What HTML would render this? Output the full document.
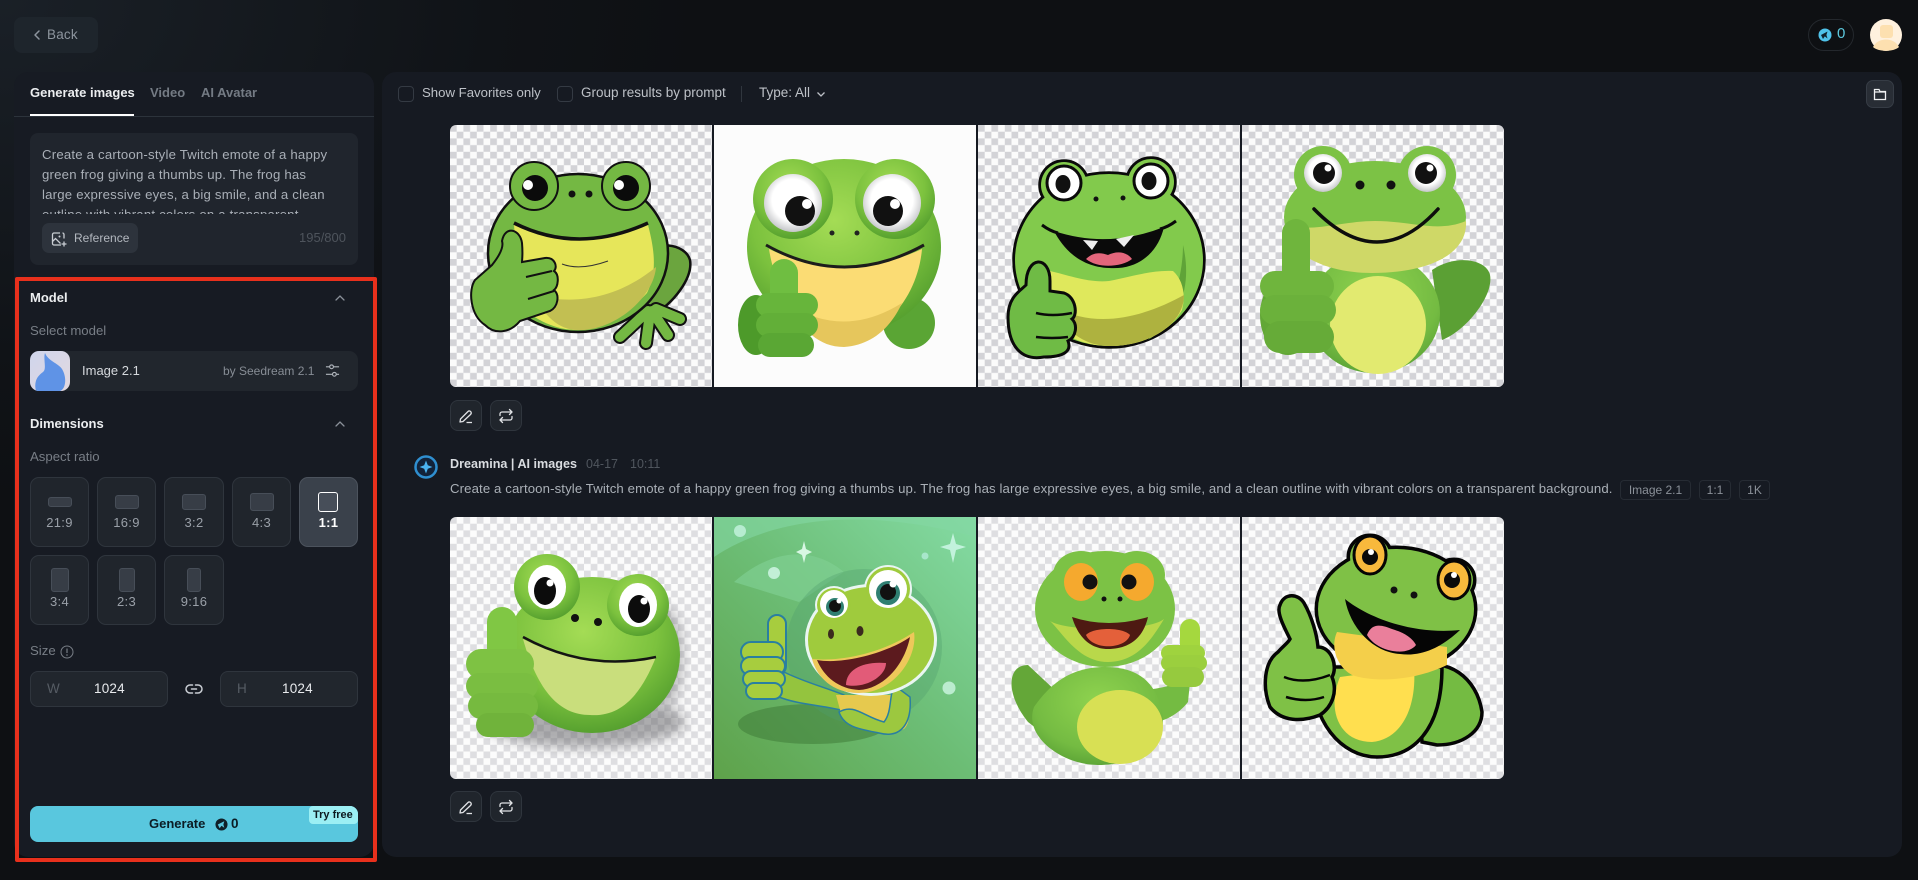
<!DOCTYPE html>
<html lang="en"><head><meta charset="utf-8"><title>Dreamina</title>
<style>
html,body{margin:0;padding:0;width:1918px;height:880px;overflow:hidden;background:#0e1013}
body{font-family:"Liberation Sans",sans-serif;position:relative;color:#e8eaed}
.bg{position:absolute;inset:0;background:radial-gradient(700px 500px at 0 0,#1a2027 0%,#101317 70%,#0e1013 100%)}
.a{position:absolute;box-sizing:border-box}
.t{position:absolute;white-space:nowrap;line-height:20px;font-size:13.5px}
.b{font-weight:700}
.ar{position:absolute;box-sizing:border-box;width:59px;height:70px;border:1px solid #2f353d;border-radius:9px;background:#20252c;color:#9aa0a8;font-size:13px;text-align:center;line-height:20px}
.ar i{position:absolute;display:block;background:#373d46;border:1px solid #474e58;border-radius:3px;box-sizing:border-box}
.ar span{position:absolute;left:0;right:0;top:35px;letter-spacing:.3px}
.ar.on{background:#3a414b;border-color:#4c535d;color:#fff;font-weight:700}
.ar.on i{background:#474e59;border:1.5px solid #fff}
.ib{position:absolute;box-sizing:border-box;width:32px;height:31px;border:1px solid #2f353d;border-radius:8px;background:#20252c}
.ib svg{position:absolute;left:7px;top:7px}
.fr{position:absolute;width:262px;height:262px;display:block}
.tag{position:absolute;box-sizing:border-box;height:20px;top:480px;border:1px solid #262b33;border-radius:4px;color:#8b9199;font-size:12px;line-height:18px;text-align:center}
.cb{position:absolute;box-sizing:border-box;width:16px;height:16px;top:86px;border:1px solid #343a43;border-radius:4px}
</style></head><body>
<div class="bg"></div>
<svg width="0" height="0" style="position:absolute"><defs>
<pattern id="ck" width="13.4" height="13.4" patternUnits="userSpaceOnUse"><rect width="13.4" height="13.4" fill="#fbfbfb"/><rect width="6.7" height="6.7" fill="#d3d3d7"/><rect x="6.7" y="6.7" width="6.7" height="6.7" fill="#d3d3d7"/></pattern>
<pattern id="ck2" width="13.4" height="13.4" patternUnits="userSpaceOnUse"><rect width="13.4" height="13.4" fill="#fcfcfc"/><rect width="6.7" height="6.7" fill="#dedee1"/><rect x="6.7" y="6.7" width="6.7" height="6.7" fill="#dedee1"/></pattern>
<radialGradient id="g3" cx=".45" cy=".35" r=".7"><stop offset="0" stop-color="#a4dc55"/><stop offset=".6" stop-color="#7cc23e"/><stop offset="1" stop-color="#4f9a2c"/></radialGradient>
<radialGradient id="g4" cx=".5" cy=".35" r=".7"><stop offset="0" stop-color="#8fd34f"/><stop offset=".7" stop-color="#74bb42"/><stop offset="1" stop-color="#58a034"/></radialGradient>
<linearGradient id="bg6" x1="1" y1="0" x2="0" y2="1"><stop offset="0" stop-color="#84dba4"/><stop offset=".5" stop-color="#6cbd75"/><stop offset="1" stop-color="#5ea24a"/></linearGradient>
<radialGradient id="ew" cx=".5" cy=".45" r=".6"><stop offset=".6" stop-color="#fff"/><stop offset="1" stop-color="#b5b7ba"/></radialGradient>
<linearGradient id="mt" x1="0" y1="0" x2="1" y2="1"><stop offset="0" stop-color="#cfd5ec"/><stop offset="1" stop-color="#e3d9e0"/></linearGradient>
<filter id="bl" x="-20%" y="-20%" width="140%" height="140%"><feGaussianBlur stdDeviation="6"/></filter>
</defs></svg>

<!-- top -->
<div class="a" style="left:14px;top:17px;width:84px;height:36px;background:#1e252c;border-radius:8px"></div>
<svg class="a" style="left:31px;top:27px" width="12" height="16" viewBox="0 0 12 16"><path d="M8 4 L4 8 L8 12" fill="none" stroke="#8d959e" stroke-width="1.500" stroke-linecap="round" stroke-linejoin="round"/></svg>
<div class="t" style="left:47px;top:25px;color:#8d959e;font-size:13.500px;letter-spacing:.2px">Back</div>

<div class="a" style="left:1808px;top:19px;width:46px;height:32px;border:1px solid #24282d;border-radius:16px"></div>
<svg class="a" style="left:1818px;top:28px" width="14" height="14" viewBox="0 0 14 14"><circle cx="7" cy="7" r="6.500" fill="#4fc3ea"/><path d="M3 7 L9.500 3.500 L8.400 7 L9.500 10.500 L6.800 8.400 L5 11 Z" fill="#10242e"/></svg>
<div class="t" style="left:1837px;top:24px;color:#5cc8dd;font-size:15px">0</div>
<svg class="a" style="left:1870px;top:19px" width="32" height="32" viewBox="0 0 32 32"><circle cx="16" cy="16" r="16" fill="#fff1de"/><rect x="10" y="6" width="13" height="13" rx="3" fill="#fde0b0"/><path d="M3 28 C8 18 24 18 29 28 C24 33 8 33 3 28Z" fill="#fde0b0"/></svg>

<!-- left panel -->
<div class="a" style="left:14px;top:72px;width:360px;height:785px;background:#171b23;border-radius:14px"></div>
<div class="a" style="left:14px;top:116px;width:360px;height:1px;background:#2c333b"></div>
<div class="a" style="left:30px;top:114px;width:104px;height:2px;background:#fff"></div>
<div class="t b" style="left:30px;top:83px;font-size:13px;color:#eceef0">Generate images</div>
<div class="t b" style="left:150px;top:83px;font-size:13px;color:#747b84">Video</div>
<div class="t b" style="left:201px;top:83px;font-size:13px;color:#747b84">AI Avatar</div>

<div class="a" style="left:30px;top:133px;width:328px;height:132px;background:#20252d;border-radius:8px"></div>
<div class="a" style="left:42px;top:145px;width:300px;height:69px;overflow:hidden;color:#a9afb7;font-size:13.200px;line-height:20px;letter-spacing:.2px">
<div style="white-space:nowrap">Create a cartoon-style Twitch emote of a happy</div>
<div style="white-space:nowrap">green frog giving a thumbs up. The frog has</div>
<div style="white-space:nowrap">large expressive eyes, a big smile, and a clean</div>
<div style="white-space:nowrap">outline with vibrant colors on a transparent</div>
</div>
<div class="a" style="left:42px;top:223px;width:96px;height:30px;background:#2d333c;border-radius:7px"></div>
<svg class="a" style="left:51px;top:231px" width="16" height="16" viewBox="0 0 16 16"><path d="M9 2H3a1.500 1.500 0 0 0-1.500 1.500v9A1.500 1.500 0 0 0 3 14h7M1.500 10.500l3-3 5 5" fill="none" stroke="#c9cdd3" stroke-width="1.300"/><path d="M13 7.500V3.500a1.500 1.500 0 0 0-1.500-1.500" fill="none" stroke="#c9cdd3" stroke-width="1.300"/><path d="M13 10.500v5M10.500 13h5" stroke="#c9cdd3" stroke-width="1.300"/><circle cx="8.500" cy="5.500" r="1" fill="#c9cdd3"/></svg>
<div class="t" style="left:74px;top:228px;color:#b3b8bf;font-size:12px">Reference</div>
<div class="t" style="right:1572px;top:228px;color:#4e545c;font-size:13px">195/800</div>

<div class="t b" style="left:30px;top:288px;font-size:13px;color:#eceef0">Model</div>
<svg class="a" style="left:333px;top:292px" width="14" height="12" viewBox="0 0 14 12"><path d="M3 8 L7 4 L11 8" fill="none" stroke="#8a9099" stroke-width="1.300" stroke-linecap="round"/></svg>
<div class="t" style="left:30px;top:321px;color:#787e86;font-size:13.200px">Select model</div>
<div class="a" style="left:30px;top:351px;width:328px;height:40px;background:#21262d;border-radius:9px"></div>
<svg class="a" style="left:30px;top:351px;border-radius:9px" width="40" height="40" viewBox="0 0 40 40"><rect width="40" height="40" fill="url(#mt)"/><path d="M15 2 C18 10 28 12 32 18 C37 26 36 38 30 40 H6 C4 32 6 26 13 21 C17 18 13 8 15 2Z" fill="#5f93e6"/></svg>
<div class="t" style="left:82px;top:361px;font-size:13px;color:#d6d9dd">Image 2.1</div>
<div class="t" style="left:223px;top:361px;font-size:12px;color:#878d95">by Seedream 2.1</div>
<svg class="a" style="left:325px;top:363px" width="15" height="15" viewBox="0 0 16 16"><path d="M1 4H5M9 4H15M1 12H8M12 12H15" stroke="#b0b5bc" stroke-width="1.200" fill="none"/><circle cx="7" cy="4" r="2" fill="none" stroke="#b0b5bc" stroke-width="1.200"/><circle cx="10" cy="12" r="2" fill="none" stroke="#b0b5bc" stroke-width="1.200"/></svg>

<div class="t b" style="left:30px;top:414px;font-size:13px;color:#eceef0">Dimensions</div>
<svg class="a" style="left:333px;top:418px" width="14" height="12" viewBox="0 0 14 12"><path d="M3 8 L7 4 L11 8" fill="none" stroke="#8a9099" stroke-width="1.300" stroke-linecap="round"/></svg>
<div class="t" style="left:30px;top:447px;color:#787e86;font-size:13.200px">Aspect ratio</div>

<div class="ar" style="left:30px;top:477px"><i style="left:17px;top:19px;width:24px;height:10px"></i><span>21:9</span></div>
<div class="ar" style="left:97px;top:477px"><i style="left:17px;top:17px;width:24px;height:14px"></i><span>16:9</span></div>
<div class="ar" style="left:164px;top:477px;width:60px"><i style="left:17px;top:16px;width:24px;height:16px"></i><span>3:2</span></div>
<div class="ar" style="left:232px;top:477px"><i style="left:17px;top:15px;width:24px;height:18px"></i><span>4:3</span></div>
<div class="ar on" style="left:299px;top:477px"><i style="left:18px;top:14px;width:20px;height:20px"></i><span>1:1</span></div>
<div class="ar" style="left:30px;top:555px"><i style="left:20px;top:12px;width:18px;height:24px"></i><span style="top:36px">3:4</span></div>
<div class="ar" style="left:97px;top:555px"><i style="left:21px;top:12px;width:16px;height:24px"></i><span style="top:36px">2:3</span></div>
<div class="ar" style="left:164px;top:555px;width:60px"><i style="left:22px;top:12px;width:14px;height:24px"></i><span style="top:36px">9:16</span></div>

<div class="t" style="left:30px;top:641px;color:#787e86;font-size:13.200px">Size</div>
<svg class="a" style="left:60px;top:645px" width="14" height="14" viewBox="0 0 14 14"><circle cx="7" cy="7" r="6" fill="none" stroke="#787e86" stroke-width="1"/><path d="M7 3.500V8" stroke="#787e86" stroke-width="1.200"/><circle cx="7" cy="10" r=".8" fill="#787e86"/></svg>
<div class="a" style="left:30px;top:671px;width:138px;height:36px;background:#21262d;border:1px solid #2f353d;border-radius:8px"></div>
<div class="a" style="left:220px;top:671px;width:138px;height:36px;background:#21262d;border:1px solid #2f353d;border-radius:8px"></div>
<div class="t" style="left:47px;top:679px;color:#565c64;font-size:13.500px">W</div>
<div class="t" style="left:94px;top:679px;color:#e8eaed;font-size:13.500px;letter-spacing:.2px">1024</div>
<div class="t" style="left:237px;top:679px;color:#565c64;font-size:13.500px">H</div>
<div class="t" style="left:282px;top:679px;color:#e8eaed;font-size:13.500px;letter-spacing:.2px">1024</div>
<svg class="a" style="left:185px;top:681px" width="18" height="16" viewBox="0 0 18 16"><path d="M7.500 4H5a4 4 0 0 0 0 8h2.500M10.500 4H13a4 4 0 0 1 0 8h-2.500M6.500 8h5" fill="none" stroke="#c9cdd3" stroke-width="1.500" stroke-linecap="round"/></svg>

<div class="a" style="left:30px;top:806px;width:328px;height:36px;background:#59c7de;border-radius:8px"></div>
<div class="a" style="left:309px;top:806px;width:49px;height:18px;background:#9beff4;border-radius:4px 8px 4px 4px"></div>
<div class="t b" style="left:313px;top:805px;font-size:11px;color:#0c1a20">Try free</div>
<div class="t b" style="left:149px;top:814px;font-size:13px;color:#0b1c24">Generate</div>
<svg class="a" style="left:215px;top:818px" width="13" height="13" viewBox="0 0 14 14"><circle cx="7" cy="7" r="6.500" fill="#102028"/><path d="M3 7 L10 3.500 L9 7 L10 10.500 L7 8.400 L5 11 Z" fill="#59c7de"/></svg>
<div class="t b" style="left:231px;top:814px;font-size:13.500px;color:#0b1c24">0</div>

<!-- red -->
<div class="a" style="left:15px;top:277px;width:362px;height:585px;border:4px solid #e8301c;border-radius:2px"></div>

<!-- main panel -->
<div class="a" style="left:382px;top:72px;width:1520px;height:785px;background:#161a22;border-radius:14px"></div>
<div class="cb" style="left:398px"></div>
<div class="t" style="left:422px;top:83px;color:#bdc1c7;font-size:13.200px">Show Favorites only</div>
<div class="cb" style="left:557px"></div>
<div class="t" style="left:581px;top:83px;color:#bdc1c7;font-size:13.500px">Group results by prompt</div>
<div class="a" style="left:741px;top:86px;width:1px;height:16px;background:#30363e"></div>
<div class="t" style="left:759px;top:83px;color:#bdc1c7;font-size:13.500px">Type: All</div>
<svg class="a" style="left:815px;top:88px" width="12" height="12" viewBox="0 0 12 12"><path d="M2.500 4.500 L6 8 L9.500 4.500" fill="none" stroke="#bdc1c7" stroke-width="1.300"/></svg>
<div class="a" style="left:1866px;top:80px;width:28px;height:28px;background:#282d35;border:1px solid #363c45;border-radius:7px"></div>
<svg class="a" style="left:1873px;top:87px" width="14" height="14" viewBox="0 0 14 14"><path d="M1.500 5V2.500H6L7 4.500H12.500V12.500H1.500V5H12.500" fill="none" stroke="#f0f1f3" stroke-width="1.300"/></svg>

<!-- FROG 1 -->
<svg class="fr" style="left:450px;top:125px;border-radius:6px 0 0 6px" viewBox="0 0 262 262">
<rect width="262" height="262" fill="url(#ck)"/>
<path d="M188 130C205 115 235 118 240 135C243 152 225 178 200 192L178 185Z" fill="#6ba53e" stroke="#111" stroke-width="2.500"/>
<g fill="none" stroke-linecap="round"><g stroke="#111" stroke-width="14"><path d="M198 186L170 212M200 188L196 218M202 186L218 210M206 184L230 194"/></g><g stroke="#74b843" stroke-width="10"><path d="M198 186L170 212M200 188L196 218M202 186L218 210M206 184L230 194"/></g></g>
<ellipse cx="128" cy="128" rx="90" ry="79" fill="#74b843" stroke="#111" stroke-width="2.500"/>
<path d="M64 100Q128 130 198 100C206 130 206 150 197 168C175 192 150 205 128 205C105 205 85 195 70 180Z" fill="#e6e65a"/>
<path d="M84 170C130 182 172 170 206 142C204 172 165 206 128 205C108 205 94 190 84 170Z" fill="#c2bf52"/>
<path d="M64 98Q128 130 198 98" fill="none" stroke="#111" stroke-width="3.500"/>
<path d="M112 139Q130 146 158 136" fill="none" stroke="#333" stroke-width="1"/>
<circle cx="84" cy="61" r="24" fill="#74b843" stroke="#111" stroke-width="2"/><circle cx="176" cy="61" r="24" fill="#74b843" stroke="#111" stroke-width="2"/>
<circle cx="85" cy="63" r="13" fill="#0b0b0b"/><circle cx="176" cy="63" r="13" fill="#0b0b0b"/>
<circle cx="78" cy="60" r="5" fill="#fff"/><circle cx="169" cy="60" r="5" fill="#fff"/>
<circle cx="122" cy="69" r="3.500" fill="#111"/><circle cx="139" cy="69" r="3.500" fill="#111"/>
<path d="M42 140C50 130 54 122 52 116C55 100 70 104 72 118C73 130 72 135 72 137L95 133C105 132 108 142 104 146C110 150 108 162 104 165C110 170 108 182 100 186L70 196C60 208 45 210 35 200C20 190 18 165 25 155Z" fill="#74b843" stroke="#111" stroke-width="2"/>
<path d="M76 152L102 146M78 174L104 166" stroke="#111" stroke-width="2" fill="none"/>
</svg>

<!-- FROG 2 -->
<svg class="fr" style="left:714px;top:125px" viewBox="0 0 262 262">
<rect width="262" height="262" fill="#fcfcfc"/>
<ellipse cx="195" cy="198" rx="26" ry="26" fill="#5aa534"/>
<g fill="url(#g3)"><ellipse cx="130" cy="122" rx="97" ry="88"/><circle cx="79" cy="74" r="40"/><circle cx="181" cy="74" r="40"/></g>
<path d="M55 124Q130 160 208 124C204 170 172 212 130 212C90 212 62 170 55 124Z" fill="#fbdc74"/>
<path d="M76 180Q130 214 188 178C178 200 160 220 130 222C105 222 88 205 76 180Z" fill="#e6c65c"/>
<path d="M52 120Q130 164 210 120" fill="none" stroke="#1c1c1c" stroke-width="3"/>
<circle cx="79" cy="78" r="29" fill="url(#ew)"/><circle cx="178" cy="78" r="29" fill="url(#ew)"/>
<circle cx="86" cy="86" r="15" fill="#111"/><circle cx="174" cy="86" r="15" fill="#111"/>
<circle cx="93" cy="79" r="5" fill="#fff"/><circle cx="181" cy="79" r="5" fill="#fff"/>
<circle cx="118" cy="108" r="2.500" fill="#222"/><circle cx="143" cy="108" r="2.500" fill="#222"/>
<ellipse cx="42" cy="200" rx="18" ry="30" fill="#4d9a2a"/>
<rect x="56" y="134" width="28" height="70" rx="14" fill="#6fbe41"/>
<rect x="42" y="168" width="62" height="24" rx="12" fill="#67b53b"/><rect x="42" y="188" width="62" height="24" rx="12" fill="#62af38"/><rect x="44" y="208" width="56" height="24" rx="12" fill="#5aa734"/>
</svg>

<!-- FROG 3 -->
<svg class="fr" style="left:978px;top:125px" viewBox="0 0 262 262">
<rect width="262" height="262" fill="url(#ck)"/>
<g stroke="#0a0a0a" stroke-width="5.500" fill="#0a0a0a"><ellipse cx="131" cy="135" rx="94" ry="86"/><circle cx="86" cy="60" r="23"/><circle cx="173" cy="57" r="23"/></g>
<g fill="#82ca4c"><ellipse cx="131" cy="135" rx="94" ry="86"/><circle cx="86" cy="60" r="23"/><circle cx="173" cy="57" r="23"/></g>
<path d="M205 120C212 150 210 190 170 215C195 190 205 150 205 120Z" fill="#5fa338"/>
<path d="M72 146C90 150 110 158 131 156C160 150 175 145 195 146C205 155 208 170 204 185C190 210 160 221 132 221C110 221 90 214 78 200C72 180 70 160 72 146Z" fill="#dfe85c"/>
<path d="M78 182C120 206 170 190 206 170C206 200 170 221 132 221C110 221 88 210 78 182Z" fill="#aeb23f"/>
<circle cx="86" cy="58" r="17" fill="#fff" stroke="#0a0a0a" stroke-width="3"/><circle cx="173" cy="56" r="17" fill="#fff" stroke="#0a0a0a" stroke-width="3"/>
<ellipse cx="85" cy="59" rx="7.500" ry="9" fill="#111"/><ellipse cx="171" cy="56" rx="7.500" ry="9" fill="#111"/>
<circle cx="118" cy="74" r="2.500" fill="#111"/><circle cx="145" cy="73" r="2.500" fill="#111"/>
<path d="M76 106Q130 124 186 102C180 128 160 145 131 143C103 142 86 125 76 106Z" fill="#0a0a0a"/>
<path d="M64 100Q72 106 80 108M198 96Q190 102 182 104" fill="none" stroke="#0a0a0a" stroke-width="3"/>
<path d="M105 115L120 116L114 125ZM138 114L156 110L146 122Z" fill="#eee"/>
<path d="M108 134C116 126 124 128 130 130C138 126 148 126 154 134C144 142 120 144 108 134Z" fill="#e4667c"/>
<path d="M30 192C30 172 42 166 48 160C48 130 72 130 72 156C72 160 72 164 72 166L86 168C98 172 100 190 94 194C100 200 98 212 90 216C94 226 86 232 66 232C44 236 30 222 30 192Z" fill="#6fbb45" stroke="#0a0a0a" stroke-width="3"/>
<path d="M58 188Q74 192 94 188M58 212Q74 214 90 212" fill="none" stroke="#0a0a0a" stroke-width="2.500"/>
</svg>

<!-- FROG 4 -->
<svg class="fr" style="left:1242px;top:125px;border-radius:0 6px 6px 0" viewBox="0 0 262 262">
<rect width="262" height="262" fill="url(#ck)"/>
<path d="M190 145C215 128 245 135 248 150C252 170 225 205 200 215Z" fill="#5ba034"/>
<ellipse cx="132" cy="188" rx="66" ry="60" fill="url(#g4)"/>
<ellipse cx="136" cy="200" rx="48" ry="49" fill="#e2ea70"/>
<g fill="#7cc245"><ellipse cx="133" cy="92" rx="91" ry="56"/><circle cx="81" cy="50" r="29"/><circle cx="185" cy="50" r="29"/></g>
<path d="M43 100C70 108 100 96 133 96C170 96 195 108 224 96C226 130 185 148 130 148C88 148 46 132 43 100Z" fill="#cfd867"/>
<circle cx="81" cy="48" r="19" fill="url(#ew)"/><circle cx="185" cy="48" r="19" fill="url(#ew)"/>
<circle cx="82" cy="48" r="11" fill="#111"/><circle cx="184" cy="48" r="11" fill="#111"/>
<circle cx="86" cy="43" r="3.500" fill="#fff"/><circle cx="188" cy="43" r="3.500" fill="#fff"/>
<circle cx="118" cy="60" r="4.500" fill="#111"/><circle cx="149" cy="60" r="4.500" fill="#111"/>
<path d="M72 84Q136 150 196 84" fill="none" stroke="#0d0d0d" stroke-width="3.500" stroke-linecap="round"/>
<rect x="40" y="94" width="28" height="80" rx="14" fill="#6fb53d"/>
<ellipse cx="46" cy="190" rx="28" ry="40" fill="#62a736"/>
<rect x="18" y="146" width="74" height="30" rx="15" fill="#6fb53d"/><rect x="18" y="170" width="76" height="30" rx="15" fill="#6bb13b"/><rect x="22" y="196" width="70" height="32" rx="16" fill="#66ab38"/>
</svg>

<!-- Row 1 actions -->
<div class="ib" style="left:450px;top:400px"><svg width="16" height="16" viewBox="0 0 16 16"><path d="M2.500 11L10 3.500C11 2.500 12.500 3 13 4S13 6 12.500 6.500L5 13.500L2 14Z" fill="none" stroke="#e0e2e5" stroke-width="1.300" stroke-linejoin="round"/><path d="M8.500 14.500H14" stroke="#e0e2e5" stroke-width="1.300"/></svg></div>
<div class="ib" style="left:490px;top:400px"><svg width="16" height="16" viewBox="0 0 16 16"><path d="M2 7.500V6A2 2 0 0 1 4 4H13.500M11.500 1.500L14 4L11.500 6.500M14 8.500V10A2 2 0 0 1 12 12H2.500M4.500 9.500L2 12L4.500 14.500" fill="none" stroke="#e0e2e5" stroke-width="1.300" stroke-linecap="round" stroke-linejoin="round"/></svg></div>

<!-- Row 2 header -->
<svg class="a" style="left:414px;top:455px" width="24" height="24" viewBox="0 0 24 24"><circle cx="12" cy="12" r="10.500" fill="#12233a" stroke="#2f8fd0" stroke-width="2.500"/><path d="M12 5.500L13.800 10.200L18.500 12L13.800 13.800L12 18.500L10.200 13.800L5.500 12L10.200 10.200Z" fill="#4bb4f2"/></svg>
<div class="t b" style="left:450px;top:454px;color:#d9dce0;font-size:12.600px">Dreamina | AI images</div>
<div class="t" style="left:586px;top:454px;color:#50565e;font-size:12.500px">04-17</div>
<div class="t" style="left:630px;top:454px;color:#50565e;font-size:12.500px">10:11</div>
<div class="t" style="left:450px;top:479px;color:#aab0b7;font-size:13.200px;letter-spacing:.115px">Create a cartoon-style Twitch emote of a happy green frog giving a thumbs up. The frog has large expressive eyes, a big smile, and a clean outline with vibrant colors on a transparent background.</div>
<div class="tag" style="left:1620px;width:71px">Image 2.1</div>
<div class="tag" style="left:1699px;width:32px">1:1</div>
<div class="tag" style="left:1739px;width:31px">1K</div>

<!-- FROG 5 -->
<svg class="fr" style="left:450px;top:517px;border-radius:6px 0 0 6px" viewBox="0 0 262 262">
<rect width="262" height="262" fill="url(#ck2)"/>
<ellipse cx="135" cy="205" rx="100" ry="26" fill="#6c6c70" opacity=".55" filter="url(#bl)"/>
<ellipse cx="215" cy="140" rx="18" ry="50" fill="#6c6c70" opacity=".45" filter="url(#bl)"/>
<g fill="url(#g3)"><ellipse cx="142" cy="138" rx="88" ry="78"/><circle cx="97" cy="70" r="33"/><circle cx="188" cy="88" r="31"/></g>
<path d="M73 122Q137 155 206 140C190 180 170 200 140 198C110 198 88 175 73 122Z" fill="#c9de7c"/>
<path d="M73 120Q137 155 206 140" fill="none" stroke="#141414" stroke-width="2.500"/>
<ellipse cx="97" cy="70" rx="19" ry="22" fill="#fff"/><ellipse cx="188" cy="88" rx="19" ry="22" fill="#fff"/>
<ellipse cx="95" cy="74" rx="11" ry="14" fill="#0c0c0c"/><ellipse cx="189" cy="92" rx="11" ry="14" fill="#0c0c0c"/>
<circle cx="100" cy="66" r="3.500" fill="#fff"/><circle cx="194" cy="84" r="3.500" fill="#fff"/>
<circle cx="125" cy="101" r="4" fill="#111"/><circle cx="148" cy="105" r="4" fill="#111"/>
<rect x="37" y="90" width="30" height="76" rx="15" fill="#80c744"/>
<rect x="16" y="132" width="68" height="30" rx="15" fill="#7ec243"/><rect x="16" y="156" width="72" height="26" rx="13" fill="#7abe41"/><rect x="18" y="176" width="70" height="26" rx="13" fill="#76ba3f"/><rect x="26" y="196" width="58" height="24" rx="12" fill="#70b33b"/>
</svg>

<!-- FROG 6 -->
<svg class="fr" style="left:714px;top:517px" viewBox="0 0 262 262">
<rect width="262" height="262" fill="url(#bg6)"/>
<path d="M0 40C60 0 150 -10 262 20V0H0Z" fill="#83d7a4" opacity=".6"/>
<path d="M20 65C60 30 100 30 130 55L85 85Z" fill="#7fcf92" opacity=".7"/>
<ellipse cx="99" cy="207" rx="75" ry="20" fill="#3f7c38" opacity=".55"/>
<circle cx="150" cy="130" r="78" fill="#4f9e6c" opacity=".35"/>
<circle cx="26" cy="14" r="6" fill="#b6ecd0"/><circle cx="60" cy="56" r="6" fill="#c2efd6"/><circle cx="235" cy="171" r="6.500" fill="#bbeccf"/><circle cx="211" cy="39" r="3.500" fill="#a8e6ca"/>
<path d="M239 16L242 27L252 30L242 33L239 46L236 33L226 30L236 27Z" fill="#c2f2dc"/>
<path d="M90 24L92 32L98 35L92 38L90 46L88 38L82 35L88 32Z" fill="#d8f7e4"/>
<path d="M70 155C90 165 110 170 130 178L135 195C110 188 85 188 65 180Z" fill="#94c43e" stroke="#2a7fa0" stroke-width="1.500"/>
<path d="M122 178H185C196 185 198 205 190 212C170 220 138 212 128 200Z" fill="#e6c94e"/>
<path d="M125 195C140 186 150 200 170 205C178 195 175 180 180 168L196 180C198 205 188 222 165 216C145 212 130 210 125 195Z" fill="#9cc83f" stroke="#2a7fa0" stroke-width="1.500"/>
<g fill="#eaf6f2"><ellipse cx="157" cy="123" rx="66" ry="56"/><circle cx="174" cy="72" r="24"/><circle cx="120" cy="88" r="19"/></g>
<g fill="#9fcb3d"><ellipse cx="157" cy="123" rx="63" ry="53"/><circle cx="174" cy="72" r="22"/><circle cx="120" cy="88" r="17"/></g>
<path d="M98 142C130 145 170 135 200 115C204 140 180 176 145 176C118 176 103 160 98 142Z" fill="#eec85a"/>
<path d="M103 143C130 148 175 135 196 120C190 150 168 172 145 173C125 172 110 160 103 143Z" fill="#5c1a1e"/>
<path d="M132 168C132 152 150 144 172 146C172 160 150 172 132 168Z" fill="#e25b78"/>
<circle cx="174" cy="72" r="19" fill="#fff"/><circle cx="120" cy="87" r="14" fill="#fff"/>
<circle cx="174" cy="76" r="12" fill="#2f7f72"/><circle cx="121" cy="90" r="9" fill="#2f7f72"/>
<circle cx="174" cy="75" r="8" fill="#111"/><circle cx="121" cy="89" r="6" fill="#111"/>
<circle cx="179" cy="67" r="3.500" fill="#fff"/><circle cx="125" cy="84" r="2.500" fill="#fff"/>
<ellipse cx="117" cy="117" rx="3" ry="5" fill="#3b2a1e"/><ellipse cx="146" cy="114" rx="3.500" ry="5" fill="#3b2a1e"/>
<g stroke="#2a7fa0" stroke-width="2" fill="#a7cd3e"><rect x="54" y="98" width="18" height="60" rx="9"/><rect x="27" y="125" width="42" height="20" rx="10"/><rect x="27" y="140" width="44" height="18" rx="9"/><rect x="29" y="154" width="42" height="16" rx="8"/><rect x="32" y="166" width="36" height="16" rx="8"/></g>
</svg>

<!-- FROG 7 -->
<svg class="fr" style="left:978px;top:517px" viewBox="0 0 262 262">
<rect width="262" height="262" fill="url(#ck2)"/>
<path d="M50 148C28 148 28 178 50 205L72 222L95 190Z" fill="#64a738"/>
<path d="M175 172C190 170 200 165 212 165L210 185C200 198 185 205 175 205Z" fill="#74bb42"/>
<path d="M56 190C70 170 90 150 127 150C160 150 178 165 184 195C190 225 165 248 120 248C85 248 45 220 56 190Z" fill="url(#g4)"/>
<ellipse cx="142" cy="210" rx="43" ry="37" fill="#d8e054"/>
<g fill="#7cc245"><ellipse cx="127" cy="92" rx="70" ry="58"/><ellipse cx="103" cy="58" rx="28" ry="24"/><ellipse cx="159" cy="58" rx="28" ry="24"/></g>
<path d="M72 104C84 115 100 145 130 145C160 145 175 120 186 102C170 115 90 115 72 104Z" fill="#b9d84a"/>
<ellipse cx="103" cy="65" rx="17" ry="19" fill="#f5a92e"/><ellipse cx="159" cy="65" rx="17" ry="19" fill="#f5a92e"/>
<circle cx="112" cy="65" r="7.500" fill="#111"/><circle cx="151" cy="65" r="7.500" fill="#111"/>
<circle cx="126" cy="82" r="2.500" fill="#111"/><circle cx="142" cy="82" r="2.500" fill="#111"/>
<path d="M94 100Q130 112 170 100C165 122 150 132 130 132C112 132 100 120 94 100Z" fill="#4e1a12"/>
<path d="M108 118C115 110 145 110 152 118C148 132 115 134 108 118Z" fill="#e4603a"/>
<rect x="202" y="102" width="20" height="50" rx="10" fill="#a5d83e"/>
<rect x="183" y="128" width="44" height="16" rx="8" fill="#9fd33e"/><rect x="183" y="138" width="46" height="16" rx="8" fill="#9bcf3e"/><rect x="184" y="150" width="42" height="20" rx="10" fill="#96ca3e"/>
</svg>

<!-- FROG 8 -->
<svg class="fr" style="left:1242px;top:517px;border-radius:0 6px 6px 0" viewBox="0 0 262 262">
<rect width="262" height="262" fill="url(#ck2)"/>
<path d="M175 150C205 140 235 160 240 195C240 215 220 228 195 228L180 225Z" fill="#74bb42" stroke="#050505" stroke-width="3.500"/>
<path d="M70 150C68 205 100 240 135 240C170 240 200 215 200 150Z" fill="#7fc146" stroke="#050505" stroke-width="3.500"/>
<path d="M98 160C85 190 95 225 130 225C160 222 175 190 172 150Z" fill="#ffdf4f"/>
<g fill="#050505" stroke="#050505" stroke-width="7"><ellipse cx="154" cy="92" rx="78" ry="60"/><circle cx="128" cy="40" r="20"/><circle cx="212" cy="63" r="19"/></g>
<g fill="#7fc146"><ellipse cx="154" cy="92" rx="78" ry="60"/><circle cx="128" cy="40" r="20"/><circle cx="212" cy="63" r="19"/></g>
<path d="M95 115C88 130 95 150 110 158C130 165 170 165 205 148L205 130Z" fill="#f4cf4a"/>
<path d="M103 82C125 100 170 118 218 113C200 130 180 140 158 137C130 135 108 110 103 82Z" fill="#050505"/>
<path d="M125 118C130 105 140 108 150 112C160 115 170 120 174 128C165 140 135 135 125 118Z" fill="#ea7f9b"/>
<ellipse cx="128" cy="38" rx="16" ry="19" fill="#f8b93c" stroke="#050505" stroke-width="3"/><ellipse cx="212" cy="63" rx="16" ry="19" fill="#f8b93c" stroke="#050505" stroke-width="3"/>
<circle cx="128" cy="40" r="8" fill="#0a0a0a"/><circle cx="210" cy="63" r="8" fill="#0a0a0a"/>
<circle cx="129" cy="35" r="3" fill="#fff"/><circle cx="212" cy="58" r="3" fill="#fff"/>
<circle cx="152" cy="73" r="3.500" fill="#111"/><circle cx="172" cy="78" r="3.500" fill="#111"/>
<path d="M36 135C42 128 46 126 48 122C42 110 34 95 38 88C42 76 56 76 62 86C70 100 75 118 76 130C90 130 96 150 90 160C96 175 90 190 78 198C60 205 40 205 28 190C20 170 22 145 36 135Z" fill="#7fc146" stroke="#050505" stroke-width="3.500"/>
<path d="M42 160Q62 168 88 158M44 180Q64 186 82 180" fill="none" stroke="#050505" stroke-width="2.500"/>
</svg>

<!-- Row 2 actions -->
<div class="ib" style="left:450px;top:791px"><svg width="16" height="16" viewBox="0 0 16 16"><path d="M2.500 11L10 3.500C11 2.500 12.500 3 13 4S13 6 12.500 6.500L5 13.500L2 14Z" fill="none" stroke="#e0e2e5" stroke-width="1.300" stroke-linejoin="round"/><path d="M8.500 14.500H14" stroke="#e0e2e5" stroke-width="1.300"/></svg></div>
<div class="ib" style="left:490px;top:791px"><svg width="16" height="16" viewBox="0 0 16 16"><path d="M2 7.500V6A2 2 0 0 1 4 4H13.500M11.500 1.500L14 4L11.500 6.500M14 8.500V10A2 2 0 0 1 12 12H2.500M4.500 9.500L2 12L4.500 14.500" fill="none" stroke="#e0e2e5" stroke-width="1.300" stroke-linecap="round" stroke-linejoin="round"/></svg></div>
</body></html>
